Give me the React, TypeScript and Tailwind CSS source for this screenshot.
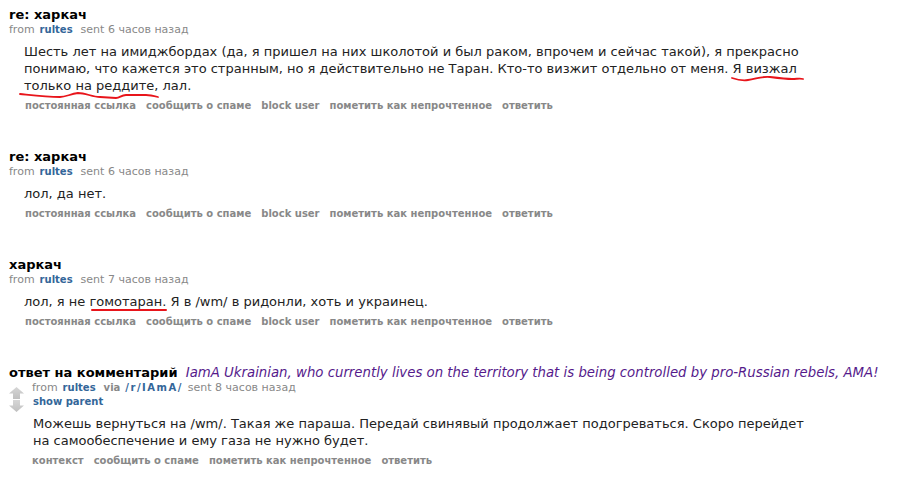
import React from "react";

const F = "font-['DejaVu_Sans',Verdana,sans-serif]";

function Buttons({ items, className }: { items: string[]; className: string }) {
  return (
    <ul className={`flex h-[14px] gap-[10px] text-[10px] leading-[14px] font-bold text-[#888] ${className}`}>
      {items.map((t) => (
        <li key={t}>{t}</li>
      ))}
    </ul>
  );
}

function Meta({ time, via }: { time: string; via?: boolean }) {
  return (
    <div className="flex h-[14px] items-baseline text-[11px] leading-[14px] text-[#888] whitespace-nowrap overflow-visible">
      <span>from</span>
      <span className="ml-[5px] text-[10px] font-bold text-[#369]">rultes</span>
      {via ? (
        <>
          <span className="ml-[8px] text-[10px] font-bold text-[#888]">via</span>
          <span className="ml-[5px] text-[10px] font-bold text-[#369] tracking-[1.5px]">/r/IAmA/</span>
          <span className="ml-[5px]">sent {time} часов назад</span>
        </>
      ) : (
        <span className="ml-[8px]">sent {time} часов назад</span>
      )}
    </div>
  );
}

function UpArrow() {
  return (
    <svg width="15" height="12" viewBox="0 0 15 12">
      <defs>
        <linearGradient id="ga" x1="0" y1="0" x2="0" y2="1">
          <stop offset="0" stopColor="#d6d6d6" />
          <stop offset="1" stopColor="#c0c0c0" />
        </linearGradient>
      </defs>
      <path d="M7.5 0 L15 6.5 L11 6.5 L11 12 L4 12 L4 6.5 L0 6.5 Z" fill="url(#ga)" />
    </svg>
  );
}
function DownArrow() {
  return (
    <svg width="15" height="12" viewBox="0 0 15 12">
      <defs>
        <linearGradient id="gb" x1="0" y1="0" x2="0" y2="1">
          <stop offset="0" stopColor="#d6d6d6" />
          <stop offset="1" stopColor="#c0c0c0" />
        </linearGradient>
      </defs>
      <path d="M4 0 L11 0 L11 5.5 L15 5.5 L7.5 12 L0 5.5 L4 5.5 Z" fill="url(#gb)" />
    </svg>
  );
}

export default function App() {
  const btns = ["постоянная ссылка", "сообщить о спаме", "block user", "пометить как непрочтенное", "ответить"];
  return (
    <div className={`relative w-[901px] h-[481px] overflow-hidden bg-white ${F} text-[#222]`}>
      <div className="flex flex-col pt-[7px] pl-[9px] gap-[36px]">
        {/* message 1 */}
        <div className="flex flex-col">
          <div className="h-[16px] text-[13px] leading-[16px] font-bold text-black">re: харкач</div>
          <Meta time="6" />
          <div className="pl-[15px] mt-[6px] text-[13px] leading-[17px] whitespace-nowrap">
            Шесть лет на имиджбордах (да, я пришел на них школотой и был раком, впрочем и сейчас такой), я прекрасно
            <br />
            понимаю, что кажется это странным, но я действительно не Таран. Кто-то визжит отдельно от меня. Я визжал
            <br />
            только на реддите, лал.
          </div>
          <Buttons items={btns} className="pl-[16px] mt-[5px]" />
        </div>
        {/* message 2 */}
        <div className="flex flex-col">
          <div className="h-[16px] text-[13px] leading-[16px] font-bold text-black">re: харкач</div>
          <Meta time="6" />
          <div className="pl-[15px] mt-[6px] text-[13px] leading-[17px] whitespace-nowrap">лол, да нет.</div>
          <Buttons items={btns} className="pl-[16px] mt-[5px]" />
        </div>
        {/* message 3 */}
        <div className="flex flex-col">
          <div className="h-[16px] text-[13px] leading-[16px] font-bold text-black">харкач</div>
          <Meta time="7" />
          <div className="pl-[15px] mt-[6px] text-[13px] leading-[17px] whitespace-nowrap">
            лол, я не гомотаран. Я в /wm/ в ридонли, хоть и украинец.
          </div>
          <Buttons items={btns} className="pl-[16px] mt-[5px]" />
        </div>
        {/* message 4 */}
        <div className="flex flex-col">
          <div className="h-[16px] text-[13px] leading-[16px] whitespace-nowrap">
            <span className="font-bold text-black">ответ на комментарий</span>
            {"\u00a0 "}
            <span className="italic text-[13.3px] text-[#551a8b]">
              IamA Ukrainian, who currently lives on the territory that is being controlled by pro-Russian rebels, AMA!
            </span>
          </div>
          <div className="flex">
            <div className="flex flex-col w-[23px] pt-[6px] gap-[1px]">
              <UpArrow />
              <DownArrow />
            </div>
            <div className="flex flex-col">
              <Meta time="8" via />
              <div className="h-[14px] text-[10px] leading-[14px] font-bold text-[#369] pl-[1px]">show parent</div>
              <div className="pl-[1px] mt-[6px] text-[13px] leading-[17px] whitespace-nowrap">
                Можешь вернуться на /wm/. Такая же параша. Передай свинявый продолжает подогреваться. Скоро перейдет
                <br />
                на самообеспечение и ему газа не нужно будет.
              </div>
              <Buttons items={["контекст", "сообщить о спаме", "пометить как непрочтенное", "ответить"]} className="mt-[5px]" />
            </div>
          </div>
        </div>
      </div>
      <svg className="absolute inset-0 pointer-events-none" width="901" height="481" viewBox="0 0 901 481">
        <path
          d="M732 78 C 738 80, 742 81, 748 80 C 756 79, 762 76, 770 77 C 778 78, 786 79, 792 79 C 797 79, 800 78, 803 79"
          fill="none"
          stroke="#e8151b"
          strokeWidth="1.8"
          strokeLinecap="round"
        />
        <path
          d="M20 94 C 30 95, 45 97, 60 97 C 66 97, 70 94, 78 93 C 86 93, 92 97, 100 97 L 116 98 C 120 98, 121 95, 126 95 L 146 95 C 150 95, 154 96, 158 97"
          fill="none"
          stroke="#e8151b"
          strokeWidth="1.8"
          strokeLinecap="round"
        />
        <path d="M92 310 L 166 310" fill="none" stroke="#e8151b" strokeWidth="2" strokeLinecap="round" />
      </svg>
    </div>
  );
}
